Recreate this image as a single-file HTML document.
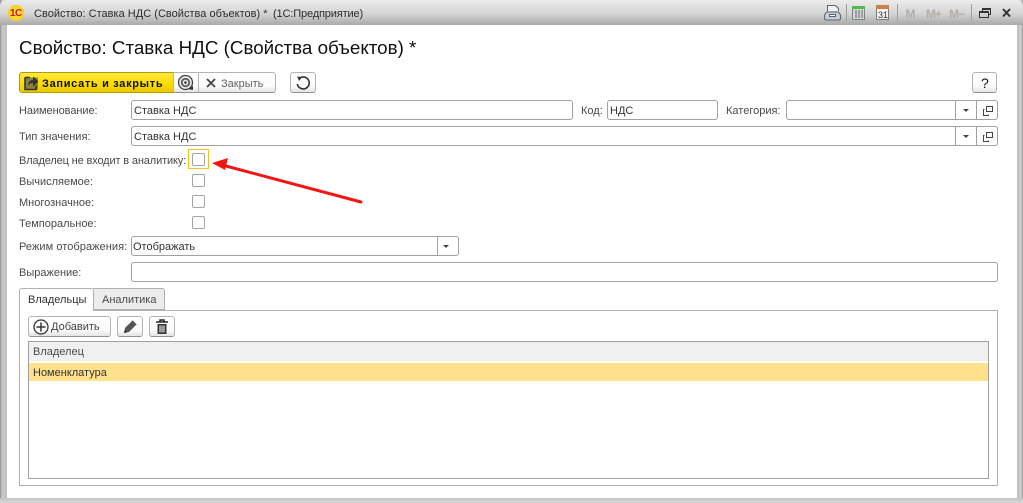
<!DOCTYPE html>
<html><head><meta charset="utf-8"><style>
html,body{margin:0;padding:0;width:1023px;height:503px;overflow:hidden;background:#fff}
body{position:relative;font-family:"Liberation Sans",sans-serif;font-size:11px;color:#4a4a4a}
.a{position:absolute;box-sizing:border-box}
.t{position:absolute;white-space:nowrap;line-height:14px}
.f{position:absolute;box-sizing:border-box;border:1px solid #a0a0a0;border-radius:3px;background:#fff;height:20px}
.v{position:absolute;white-space:nowrap;line-height:14px;color:#333}
.c{position:absolute;box-sizing:border-box;width:13px;height:13px;border:1px solid #a5a5a5;border-radius:2px;background:#fff;left:192px}
.b{position:absolute;box-sizing:border-box;border:1px solid #b4b4b4;border-bottom:1px solid #909090;border-radius:3px;background:linear-gradient(#fff,#fbfbfb 70%,#e4e4e4)}
.s{position:absolute;width:1px;background:#a0a0a0}
svg{position:absolute;overflow:visible}
</style></head><body>
<!-- window frame -->
<div class="a" style="left:0;top:0;width:1023px;height:503px;background:linear-gradient(90deg,#8c8c8c 0,#c8c8c8 2px,#c0c0c0 7px,transparent 7px),linear-gradient(270deg,#9a9a9a 0,#d0d0d0 2px,#bbb 6px,transparent 6px)"></div>
<div class="a" style="left:0;top:0;width:1023px;height:25px;border-radius:6px 6px 0 0;background:linear-gradient(#ececec,#d4d4d4 55%,#a9a9a9)"></div>
<div class="a" style="left:0;top:498px;width:1023px;height:5px;background:linear-gradient(#c4c4c4,#d8d8d8)"></div>
<div class="a" style="left:7px;top:25px;width:1010px;height:473px;background:#fff"></div>

<!-- title bar -->
<div class="a" style="left:8px;top:5px;width:16px;height:16px;border-radius:50%;background:radial-gradient(#ffe95a,#f7c400)"></div>
<div class="t" style="left:10px;top:7px;font-size:10px;font-weight:bold;color:#d01818;letter-spacing:-.6px">1С</div>
<div class="t" style="left:34px;top:7px;font-size:11px;color:#2c2c2c;letter-spacing:.02px">Свойство: Ставка НДС (Свойства объектов) *</div>
<div class="t" style="left:273px;top:7px;font-size:11px;color:#2c2c2c;letter-spacing:-.14px">(1С:Предприятие)</div>

<svg style="left:0;top:0" width="1023" height="30">
 <g fill="none" stroke="#5c6670">
  <path d="M827.500 11V5.500h8l3 3V11" fill="#f0f0f0"/><path d="M826.500 12h12l2 3v4l-1 1h-14l-1-1v-4z" fill="#c8ccd0"/><path d="M829.500 14.500h6v2h-6z" fill="#fff"/>
 </g>
 <path d="M846.500 4v17M897.500 4v17M971.500 4v17" stroke="#a0a0a0"/>
 <rect x="852.500" y="6.500" width="12" height="13" fill="#d4d8d8" stroke="#7c8484"/><rect x="852" y="6" width="13" height="3" fill="#4dbb4d"/>
 <path d="M855 11h2M858 11h2M861 11h2M855 13h2M858 13h2M861 13h2M855 15h2M858 15h2M861 15h2M855 17h2M858 17h2M861 17h2" stroke="#666"/>
 <rect x="876.500" y="6.500" width="12" height="13" fill="#f4f4f4" stroke="#7c7c7c"/><rect x="876" y="5" width="13" height="4" fill="#c8814a"/>
 <text x="878" y="18" font-family="Liberation Sans" font-size="9" fill="#333">31</text>
 <text x="905.500" y="18" font-family="Liberation Sans" font-size="12" font-weight="bold" fill="#b4aea6">M</text>
 <text x="926" y="18" font-family="Liberation Sans" font-size="12" font-weight="bold" fill="#b4aea6" letter-spacing="-1">M+</text>
 <text x="949" y="18" font-family="Liberation Sans" font-size="12" font-weight="bold" fill="#b4aea6" letter-spacing="-1">M−</text>
 <path d="M979.500 11.500h9v6h-9zM979.500 12.500h9M982.500 11V8.500h8v6H988M982.500 9.500h8" fill="none" stroke="#333"/>
 <path d="M1003 9l7 7.500M1010 9l-7 7.500" stroke="#333" stroke-width="2"/>
</svg>

<div class="t" style="left:19px;top:37px;font-size:18.8px;line-height:21px;color:#111">Свойство: Ставка НДС (Свойства объектов) *</div>

<!-- toolbar -->
<div class="a" style="left:19px;top:72px;width:155px;height:21px;border:1px solid #b79a00;border-radius:3px 0 0 3px;background:linear-gradient(#ffe93f,#fbdc00 60%,#e9c800)"></div>
<svg style="left:24px;top:75px" width="15" height="15"><path d="M1 2.500h13v12H1z" fill="#8a8340"/><path d="M1 2.500h5M1 2.500v12h11v-4" fill="none" stroke="#333" stroke-width="1.600"/><path d="M4 11c0-4 2-6 5-6V1.500l5.500 5-5.500 5V8c-2 0-4 1-5 3z" fill="#333"/></svg>
<div class="t" style="left:42px;top:77px;font-weight:bold;color:#111;letter-spacing:.68px">Записать и закрыть</div>
<div class="b" style="left:173px;top:72px;width:26px;height:21px;border-radius:0"></div>
<svg style="left:177px;top:74px" width="17" height="17"><circle cx="8.500" cy="8.500" r="7" fill="#eee" stroke="#444" stroke-width="1.300"/><circle cx="8.500" cy="8.500" r="3.800" fill="none" stroke="#666" stroke-width="2"/><circle cx="8.500" cy="8.500" r="1.300" fill="#333"/><path d="M11 15l5-3v4z" fill="#333"/></svg>
<div class="b" style="left:198px;top:72px;width:78px;height:21px;border-radius:0 3px 3px 0"></div>
<svg style="left:206px;top:78px" width="10" height="10"><path d="M1 1l8 8M9 1l-8 8" stroke="#444" stroke-width="1.800"/></svg>
<div class="t" style="left:221px;top:77px;color:#606060">Закрыть</div>
<div class="b" style="left:290px;top:72px;width:26px;height:21px"></div>
<svg style="left:295px;top:75px" width="16" height="16"><path d="M4.500 3.200A6 6 0 1 1 2.300 9" fill="none" stroke="#333" stroke-width="1.600"/><path d="M2 1.500l5 .5-2.800 4z" fill="#333"/></svg>
<div class="b" style="left:972px;top:72px;width:25px;height:21px"></div>
<div class="t" style="left:981px;top:76px;font-size:14px;color:#111">?</div>

<!-- row 1 -->
<div class="t" style="left:19px;top:104px;letter-spacing:-.06px">Наименование:</div>
<div class="f" style="left:131px;top:100px;width:442px"></div>
<div class="v" style="left:134px;top:104px">Ставка НДС</div>
<div class="t" style="left:581px;top:104px">Код:</div>
<div class="f" style="left:607px;top:100px;width:111px"></div>
<div class="v" style="left:610px;top:104px">НДС</div>
<div class="t" style="left:726px;top:104px">Категория:</div>
<div class="f" style="left:786px;top:100px;width:212px"></div>
<div class="s" style="left:955px;top:100px;height:20px"></div>
<div class="s" style="left:976px;top:100px;height:20px"></div>
<!-- row 2 -->
<div class="t" style="left:19px;top:130px">Тип значения:</div>
<div class="f" style="left:131px;top:126px;width:867px"></div>
<div class="v" style="left:134px;top:130px">Ставка НДС</div>
<div class="s" style="left:955px;top:126px;height:20px"></div>
<div class="s" style="left:976px;top:126px;height:20px"></div>

<!-- checks -->
<div class="t" style="left:19px;top:154px;letter-spacing:-.14px">Владелец не входит в аналитику:</div>
<div class="a" style="left:188px;top:149px;width:21px;height:20px;border:1px solid #f2c322"></div>
<div class="c" style="top:153px"></div>
<div class="t" style="left:19px;top:175px">Вычисляемое:</div>
<div class="c" style="top:174px"></div>
<div class="t" style="left:19px;top:196px">Многозначное:</div>
<div class="c" style="top:195px"></div>
<div class="t" style="left:19px;top:217px">Темпоральное:</div>
<div class="c" style="top:216px"></div>

<!-- arrow -->
<svg style="left:0;top:0" width="1023" height="503"><path d="M361 202L224 165.500" stroke="#f51414" stroke-width="3" stroke-linecap="round"/><path d="M212 163l16-5-3 12z" fill="#f51414"/></svg>

<div class="t" style="left:19px;top:240px;letter-spacing:.06px">Режим отображения:</div>
<div class="f" style="left:131px;top:236px;width:328px"></div>
<div class="v" style="left:133px;top:240px">Отображать</div>
<div class="s" style="left:437px;top:236px;height:20px"></div>

<div class="t" style="left:19px;top:266px">Выражение:</div>
<div class="f" style="left:131px;top:262px;width:867px"></div>

<svg style="left:0;top:0" width="1023" height="503">
 <path d="M963 109h6l-3 3z M963 135h6l-3 3z M443 245h6l-3 3z" fill="#444"/>
 <path d="M986.500 106.500h6v5h-6zM984.500 109.500h-1v6h5v-1M986.500 132.500h6v5h-6zM984.500 135.500h-1v6h5v-1" fill="none" stroke="#444"/>
</svg>

<!-- tabs -->
<div class="a" style="left:19px;top:310px;width:979px;height:176px;border:1px solid #b0b0b0;background:#fff"></div>
<div class="a" style="left:93px;top:288px;width:72px;height:22px;border:1px solid #b0b0b0;border-left:0;border-radius:0 3px 0 0;background:#ececec"></div>
<div class="a" style="left:19px;top:288px;width:75px;height:23px;border:1px solid #b0b0b0;border-bottom:0;border-radius:3px 3px 0 0;background:#fff"></div>
<div class="t" style="left:28px;top:293px;color:#333">Владельцы</div>
<div class="t" style="left:102px;top:293px">Аналитика</div>

<div class="b" style="left:28px;top:316px;width:83px;height:21px"></div>
<svg style="left:33px;top:319px" width="16" height="16"><circle cx="8" cy="8" r="7" fill="none" stroke="#333" stroke-width="1.300"/><path d="M8 3.500v9M3.500 8h9" stroke="#333" stroke-width="1.500"/></svg>
<div class="t" style="left:51px;top:320px;color:#444">Добавить</div>
<div class="b" style="left:117px;top:316px;width:26px;height:21px"></div>
<svg style="left:122px;top:318px" width="17" height="17"><path d="M2 15l1-5 8-8 4 4-8 8z" fill="#555"/><path d="M11 2l4 4" stroke="#fff"/><path d="M2 15l1-3 2 2z" fill="#222"/></svg>
<div class="b" style="left:149px;top:316px;width:26px;height:21px"></div>
<svg style="left:154px;top:318px" width="16" height="17"><path d="M2 4h12M6 4V2h4v2" fill="none" stroke="#222" stroke-width="1.500"/><path d="M3.500 6h9v10h-9z" fill="#333"/><path d="M6 7.500v7M8 7.500v7M10 7.500v7" stroke="#fff"/></svg>

<!-- table -->
<div class="a" style="left:28px;top:341px;width:961px;height:138px;border:1px solid #a0a0a0;background:#fff"></div>
<div class="a" style="left:29px;top:342px;width:959px;height:19px;background:#f0f0f0"></div>
<div class="t" style="left:33px;top:345px">Владелец</div>
<div class="a" style="left:29px;top:363px;width:959px;height:18px;background:#ffe08c"></div>
<div class="t" style="left:33px;top:366px;color:#333">Номенклатура</div>
</body></html>
